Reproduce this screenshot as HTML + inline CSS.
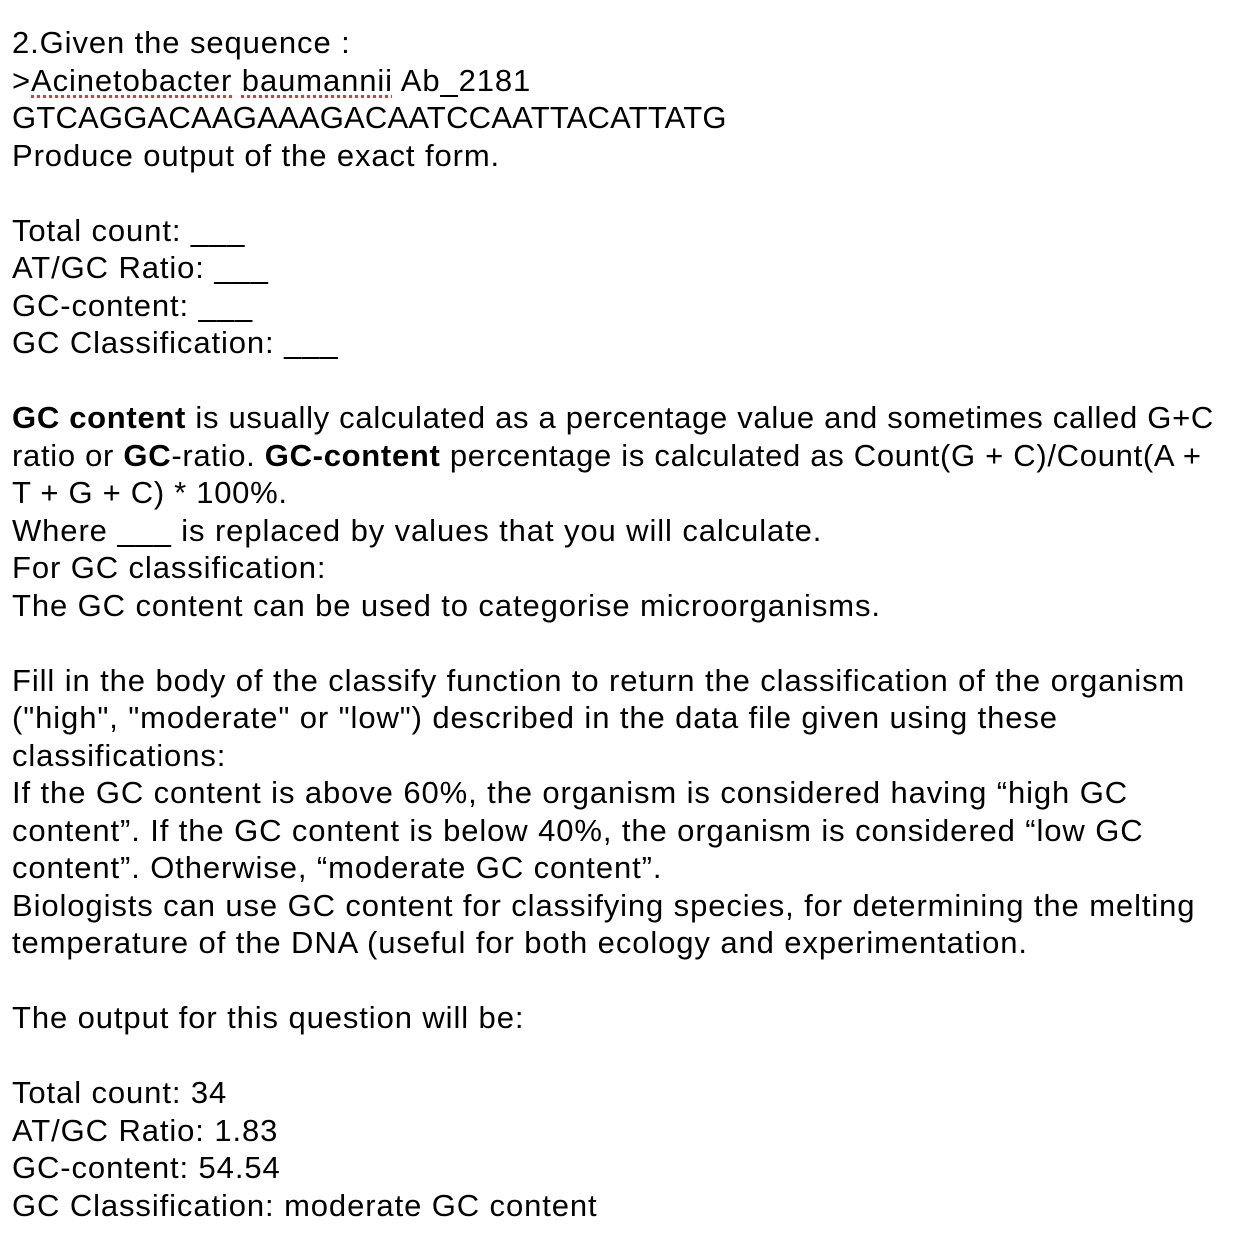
<!DOCTYPE html>
<html><head><meta charset="utf-8"><style>
html,body{margin:0;padding:0;background:#fff;}
body{width:1254px;height:1246px;overflow:hidden;font-family:"Liberation Sans",Arial,sans-serif;font-size:31px;color:#000;letter-spacing:0.9px;}
.w{position:absolute;left:12px;top:24px;}
.l{height:37.5px;line-height:37.5px;white-space:nowrap;}
.sp{text-decoration:underline dotted #e33;text-decoration-thickness:3px;text-underline-offset:4px;}
.seq{letter-spacing:0.2px;}
.p{letter-spacing:0.7px;}
</style></head><body><div class="w">
<div class="l">2.Given the sequence :</div>
<div class="l">&gt;<span class="sp">Acinetobacter</span> <span class="sp">baumannii</span> Ab_2181</div>
<div class="l seq">GTCAGGACAAGAAAGACAATCCAATTACATTATG</div>
<div class="l">Produce output of the exact form.</div>
<div class="l"></div>
<div class="l">Total count: ___</div>
<div class="l">AT/GC Ratio: ___</div>
<div class="l">GC-content: ___</div>
<div class="l">GC Classification: ___</div>
<div class="l"></div>
<div class="l p"><b>GC content</b> is usually calculated as a percentage value and sometimes called G+C</div>
<div class="l p">ratio or <b>GC</b>-ratio. <b>GC-content</b> percentage is calculated as Count(G + C)/Count(A +</div>
<div class="l p">T + G + C) * 100%.</div>
<div class="l">Where ___ is replaced by values that you will calculate.</div>
<div class="l">For GC classification:</div>
<div class="l">The GC content can be used to categorise microorganisms.</div>
<div class="l"></div>
<div class="l">Fill in the body of the classify function to return the classification of the organism</div>
<div class="l">("high", "moderate" or "low") described in the data file given using these</div>
<div class="l">classifications:</div>
<div class="l">If the GC content is above 60%, the organism is considered having “high GC</div>
<div class="l">content”. If the GC content is below 40%, the organism is considered “low GC</div>
<div class="l">content”. Otherwise, “moderate GC content”.</div>
<div class="l">Biologists can use GC content for classifying species, for determining the melting</div>
<div class="l">temperature of the DNA (useful for both ecology and experimentation.</div>
<div class="l"></div>
<div class="l">The output for this question will be:</div>
<div class="l"></div>
<div class="l">Total count: 34</div>
<div class="l">AT/GC Ratio: 1.83</div>
<div class="l">GC-content: 54.54</div>
<div class="l">GC Classification: moderate GC content</div>
</div></body></html>
